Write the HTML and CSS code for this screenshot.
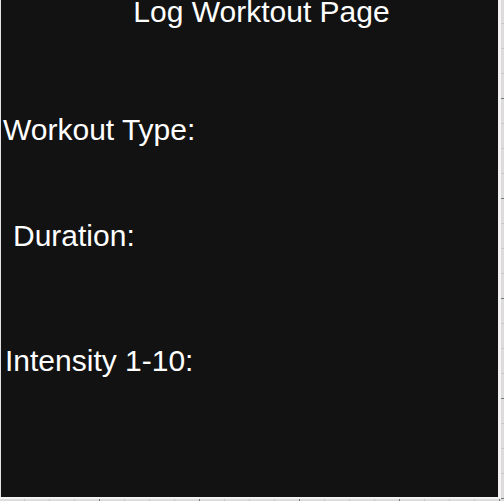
FILE: index.html
```html
<!DOCTYPE html>
<html lang="en">
<head>
<meta charset="utf-8">
<title>Log Workout</title>
<link rel="stylesheet" href="styles.css">
</head>
<body>
<div class="stage">
  <main class="panel">
    <h1 class="title">Log Worktout Page</h1>
    <div class="field field-type">Workout Type:</div>
    <div class="field field-duration">Duration:</div>
    <div class="field field-intensity">Intensity 1-10:</div>
  </main>
  <div class="gap-v"></div>
  <div class="ruler-v"></div>
  <div class="gap-h"></div>
  <div class="ruler-h"></div>
</div>
</body>
</html>
```
FILE: styles.css
```css
html, body {
  margin: 0;
  padding: 0;
  background: #e4e2e2;
  overflow: hidden;
}

.stage {
  display: grid;
  grid-template-columns: 1px 497px 3px 3px;
  grid-template-rows: 497px 2px 2px;
  width: 504px;
  height: 501px;
}

.panel {
  grid-column: 2;
  grid-row: 1;
  background: #121212;
  color: #ffffff;
  font-family: "Liberation Sans", Arial, sans-serif;
  font-size: 30px;
  display: flex;
  flex-direction: column;
  overflow: hidden;
}

.title {
  margin: 0;
  padding-left: 24px;
  font-size: 30px;
  font-weight: normal;
  line-height: 23px;
  text-align: center;
}

.field {
  line-height: 34px;
  padding-left: 2px;
}

.field-type {
  margin-top: 90px;
}

.field-duration {
  margin-top: 72px;
  padding-left: 12px;
}

.field-intensity {
  margin-top: 91px;
  padding-left: 4px;
}

.gap-v {
  grid-column: 3;
  grid-row: 1 / 3;
  background: #f4f4f4;
}

.ruler-v {
  grid-column: 4;
  grid-row: 1 / 4;
  background:
    repeating-linear-gradient(to bottom, transparent 0 98px, #777 98px 99px, transparent 99px 100px),
    repeating-linear-gradient(to bottom, transparent 0 23px, #c8c6c6 23px 24px, transparent 24px 25px),
    #dddbdb;
}

.gap-h {
  grid-column: 1 / 4;
  grid-row: 2;
  background: #f4f4f4;
}

.ruler-h {
  grid-column: 1 / 4;
  grid-row: 3;
  background:
    repeating-linear-gradient(to right, transparent 0 99px, #777 99px 100px, transparent 100px 100px),
    repeating-linear-gradient(to right, transparent 0 24px, #c8c6c6 24px 25px, transparent 25px 25px),
    #dddbdb;
}
```
